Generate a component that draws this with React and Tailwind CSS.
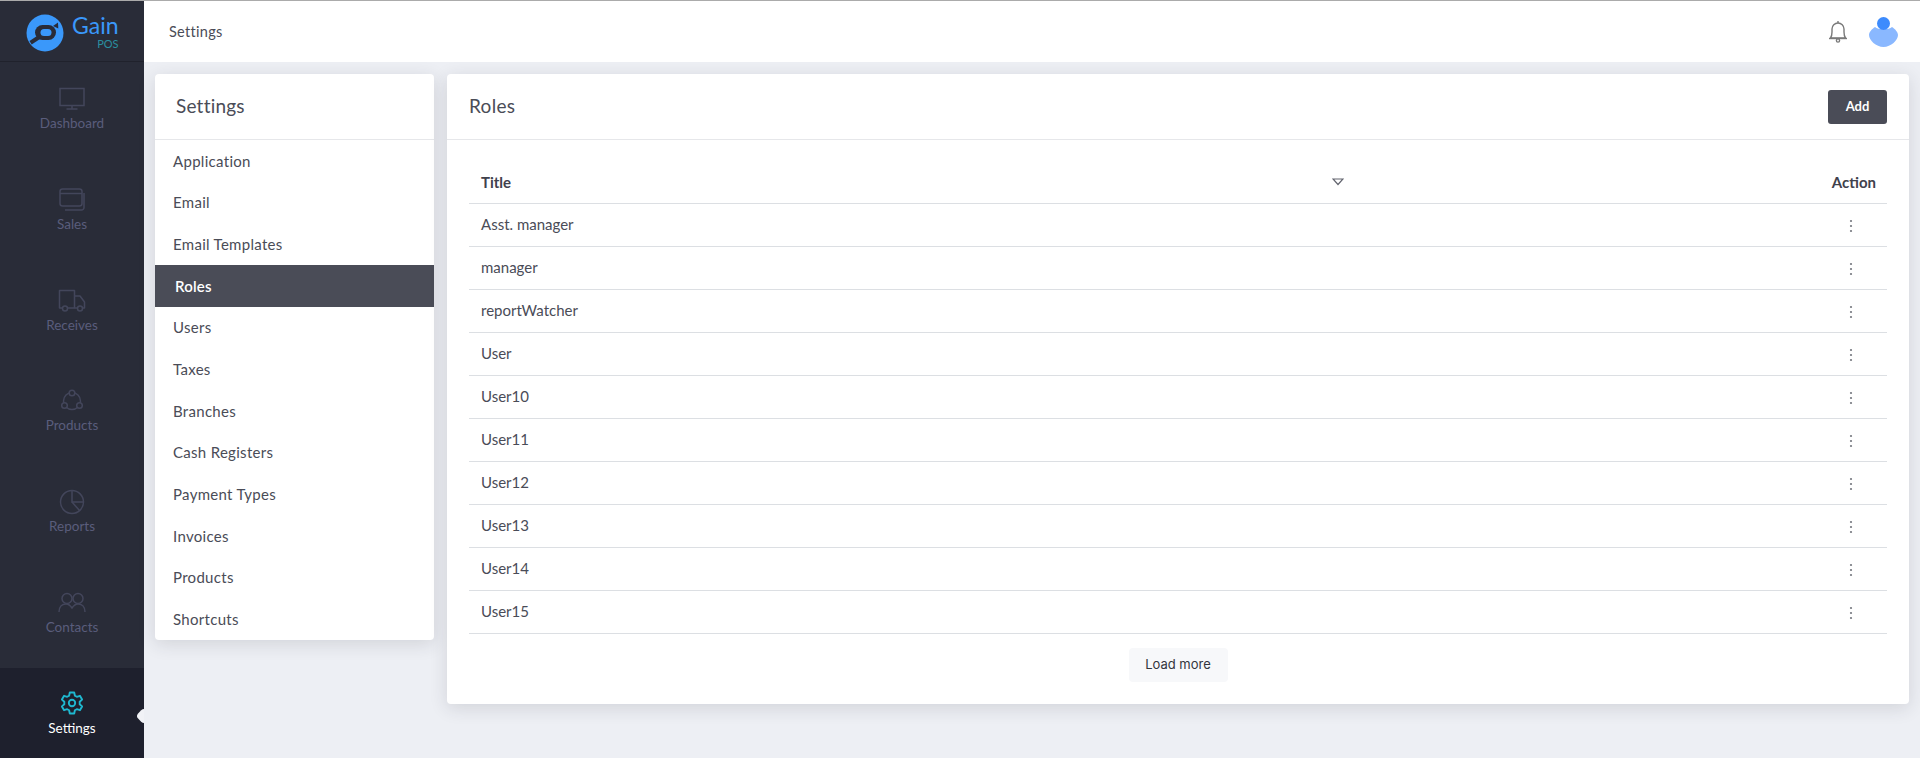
import React from 'react';

const font = { fontFamily: 'Lato, "Open Sans", sans-serif' };

const MonitorIcon = () => (
  <svg width="28" height="24" viewBox="0 0 28 24" fill="none" stroke="currentColor" strokeWidth="1.5">
    <rect x="2" y="1.5" width="24" height="17" />
    <path d="M14 18.5v3M8.5 22h11" />
  </svg>
);

const SalesIcon = () => (
  <svg width="28" height="24" viewBox="0 0 28 24" fill="none" stroke="currentColor" strokeWidth="1.5">
    <rect x="2" y="1" width="22" height="17" rx="2.5" />
    <path d="M2 5.5h22" />
    <path d="M26 5v14.5a2.5 2.5 0 0 1-2.5 2.5H7" />
  </svg>
);

const TruckIcon = () => (
  <svg width="28" height="24" viewBox="0 0 28 24" fill="none" stroke="currentColor" strokeWidth="1.5" strokeLinejoin="round">
    <path d="M5 19H1.5V1.5h15V19H9" />
    <path d="M16.5 7h5.5l4.5 6v6h-2.5M16.5 19h3.500" />
    <circle cx="7" cy="19.500" r="2.500" />
    <circle cx="22" cy="19.500" r="2.500" />
  </svg>
);

const ProductsIcon = () => (
  <svg width="24" height="24" viewBox="0 0 24 24" fill="none" stroke="currentColor" strokeWidth="1.5">
    <circle cx="12" cy="12" r="8.500" />
    <circle cx="12" cy="4" r="2.800" fill="#292c38" />
    <circle cx="4.500" cy="16.500" r="2.800" fill="#292c38" />
    <circle cx="19.500" cy="16.500" r="2.800" fill="#292c38" />
  </svg>
);

const ReportsIcon = () => (
  <svg width="26" height="26" viewBox="0 0 26 26" fill="none" stroke="currentColor" strokeWidth="1.5">
    <circle cx="13" cy="13" r="11.500" />
    <path d="M13 1.500V13h11.500" />
    <path d="M13 13l7.500 8.500" />
  </svg>
);

const ContactsIcon = () => (
  <svg width="28" height="22" viewBox="0 0 28 22" fill="none" stroke="currentColor" strokeWidth="1.5">
    <circle cx="9" cy="6.500" r="5" />
    <circle cx="20" cy="6.500" r="5" />
    <path d="M1 20c0-5 3-8 7-8 2 0 4 1 6 4 2-3 4-4 6-4 4 0 7 3 7 8" />
  </svg>
);

const GearIcon = () => (
  <svg width="24" height="24" viewBox="0 0 24 24" fill="none" stroke="currentColor" strokeWidth="1.9" strokeLinejoin="round">
    <path d="M9.8 1.500h4.400l.7 3.200 1.900 1.100 3.100-1 2.200 3.800-2.400 2.200v2.400l2.400 2.200-2.200 3.800-3.100-1-1.900 1.100-.7 3.200H9.800l-.7-3.200-1.900-1.100-3.100 1-2.200-3.800 2.400-2.200v-2.400L1.900 8.600l2.200-3.800 3.100 1 1.900-1.100z" />
    <circle cx="12" cy="12" r="3.200" />
  </svg>
);

const Logo = () => (
  <svg width="40" height="40" viewBox="0 0 40 40">
    <circle cx="20" cy="20" r="18.500" fill="#3a98fa" />
    <rect x="10" y="12" width="21" height="15" rx="7.500" fill="#292c38" />
    <rect x="15.500" y="16" width="11" height="7" rx="3.500" fill="#3a98fa" />
    <path d="M12 23L4.500 28l2.200 3.500L15 26z" fill="#292c38" />
    <path d="M28 13l5-3.500.3 6z" fill="#292c38" />
  </svg>
);

const navItems = [
  { label: 'Dashboard', icon: MonitorIcon },
  { label: 'Sales', icon: SalesIcon },
  { label: 'Receives', icon: TruckIcon },
  { label: 'Products', icon: ProductsIcon },
  { label: 'Reports', icon: ReportsIcon },
  { label: 'Contacts', icon: ContactsIcon },
];

const settingsMenu = ['Application', 'Email', 'Email Templates', 'Roles', 'Users', 'Taxes', 'Branches', 'Cash Registers', 'Payment Types', 'Invoices', 'Products', 'Shortcuts'];
const roles = ['Asst. manager', 'manager', 'reportWatcher', 'User', 'User10', 'User11', 'User12', 'User13', 'User14', 'User15'];

const Sidebar = () => (
  <aside className="w-[144px] shrink-0 h-[757px] overflow-hidden bg-[#292c38] flex flex-col">
    <div className="h-[61px] shrink-0 border-b border-[#20222c] flex items-start pl-[25px] pt-[12px]">
      <Logo />
      <div className="ml-[7px] -mt-[2px] flex flex-col items-end">
        <span className="text-[23px] leading-[29px] text-[#3a98fa]">Gain</span>
        <span className="text-[11px] leading-[9px] text-[#2a8fa0] -mt-[1px]">POS</span>
      </div>
    </div>
    <nav className="flex-1 pt-[2px]">
      {navItems.map(({ label, icon: Icon }) => (
        <div key={label} className="h-[100.700px] flex flex-col items-center justify-end pb-[32.500px] text-[#4b4e68]">
          <div className="h-[26px] flex items-center justify-center text-[#43465b]"><Icon /></div>
          <span className="text-[13.500px] leading-[18px] mt-[2px] text-[#5a5d7c]">{label}</span>
        </div>
      ))}
      <div className="relative h-[90px] bg-[#1e202d] flex flex-col items-center pt-[22px]">
        <div className="h-[26px] flex items-center justify-center text-[#1fb8d0]"><GearIcon /></div>
        <span className="text-[13.500px] leading-[18px] mt-[3px] text-white">Settings</span>
        <div className="absolute right-[-6px] top-[42px] w-[12px] h-[12px] rotate-45 rounded-[4px] bg-[#f1f2f6]" />
      </div>
    </nav>
  </aside>
);

const Topbar = () => (
  <header className="h-[61px] bg-white flex items-center justify-between pl-[25px] pr-[22px] relative z-10">
    <span className="text-[14.500px] tracking-[0.3px] text-[#4a4c57]">Settings</span>
    <div className="flex items-center gap-[21px]">
      <svg width="20" height="24" viewBox="0 0 20 24" fill="none" stroke="#7a7a7a" strokeWidth="1.400">
        <path d="M2.500 18c1-1.500 1.500-3 1.500-6V9a6 6 0 0 1 12 0v3c0 3 .5 4.500 1.500 6z" />
        <path d="M1 18.500h18" />
        <circle cx="10" cy="20.500" r="1.600" />
        <path d="M10 1v2" />
      </svg>
      <svg width="29" height="30" viewBox="0 0 29 30">
        <path d="M6 10c3 3 14 3 17 0 3 2 6 5 6 8 0 5-7 12-14.500 12S0 23 0 18c0-3 3-6 6-8z" fill="#8ab8ff" />
        <circle cx="14.500" cy="6.500" r="6.500" fill="#3d8bfd" />
      </svg>
    </div>
  </header>
);

const Dots = () => (
  <svg width="4" height="14" viewBox="0 0 4 14" fill="#75777f" className="mt-[3px]">
    <circle cx="2" cy="2" r="1.100" />
    <circle cx="2" cy="7" r="1.100" />
    <circle cx="2" cy="12" r="1.100" />
  </svg>
);

export default function App() {
  return (
    <div className="bg-white" style={font}>
      <div className="h-px bg-[#ababab]" />
      <div className="flex h-[757px] overflow-hidden bg-[#edeff4]">
        <Sidebar />
        <div className="flex-1 min-w-0 flex flex-col">
          <Topbar />
          <main className="flex items-start gap-[13px] pt-[12px] pl-[11px] pr-[11px]">
            <section className="w-[279px] shrink-0 bg-white rounded-[4px] shadow-[0_4px_18px_rgba(40,44,60,0.14)]">
              <h2 className="h-[66px] border-b border-[#e6e7ea] flex items-center pl-[21px] text-[19px] tracking-[0.2px] text-[#4a4c57]">Settings</h2>
              <ul>
                {settingsMenu.map((item) => (
                  <li
                    key={item}
                    className={item === 'Roles'
                      ? 'h-[41.700px] flex items-center pl-[20px] bg-[#4a4c57] text-white text-[15px] tracking-[0.2px] font-semibold'
                      : 'h-[41.700px] flex items-center pl-[18px] text-[#4a4c57] text-[15px] tracking-[0.3px]'}
                  >
                    {item}
                  </li>
                ))}
              </ul>
            </section>

            <section className="flex-1 min-w-0 bg-white rounded-[4px] shadow-[0_4px_18px_rgba(40,44,60,0.14)]">
              <div className="h-[66px] border-b border-[#e6e7ea] flex items-center justify-between pl-[22px] pr-[22px]">
                <h2 className="text-[19px] tracking-[0.3px] text-[#4a4c57]">Roles</h2>
                <button className="w-[59px] h-[34px] rounded-[3px] bg-[#4a4c57] text-white text-[13px] font-bold">Add</button>
              </div>
              <div className="pt-[21px] px-[22px] pb-[22px]">
                <div className="h-[43px] border-b border-[#dcdfe3] flex items-center pl-[12px] pr-[11px] text-[15px] font-bold text-[#3f414c]">
                  <span className="w-[851px]">Title</span>
                  <svg width="12" height="8" viewBox="0 0 12 8" fill="none" stroke="#62646e" strokeWidth="1.200">
                    <path d="M1 1h10L6 6.500z" />
                  </svg>
                  <span className="ml-auto">Action</span>
                </div>
                {roles.map((role) => (
                  <div key={role} className="h-[43px] border-b border-[#dcdfe3] flex items-center justify-between pl-[12px] pr-[34px] pb-[1px] text-[15px] text-[#4a4c57]">
                    <span>{role}</span>
                    <Dots />
                  </div>
                ))}
                <div className="flex justify-center pt-[14px]">
                  <button className="w-[99px] h-[34px] rounded-[4px] bg-[#f7f8fa] text-[13px] text-[#33353d]" style={{ fontFamily: 'Inter, sans-serif' }}>Load more</button>
                </div>
              </div>
            </section>
          </main>
        </div>
      </div>
    </div>
  );
}
